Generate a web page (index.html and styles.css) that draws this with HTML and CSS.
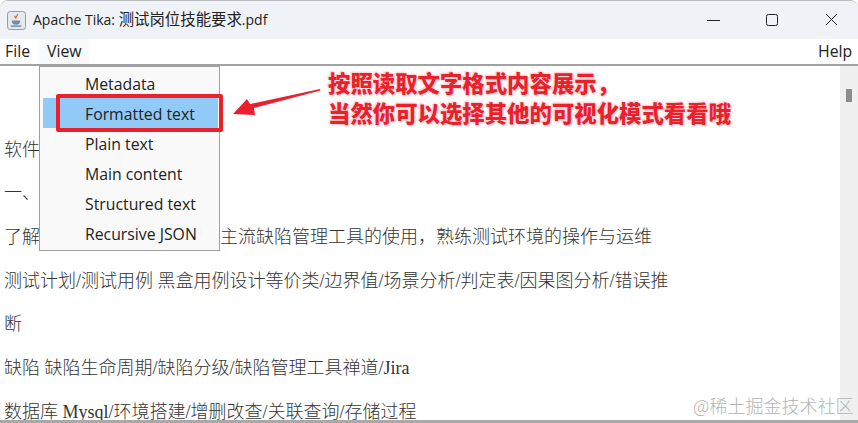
FILE: index.html
```html
<!DOCTYPE html>
<html>
	<head>
		<meta charset="UTF-8">
		<title>Apache Tika</title>
		<link rel="stylesheet" href="styles.css">
	</head>
	<body>
		<div class="window">
			<div class="titlebar">
				<svg class="app-icon" width="19" height="19" viewBox="0 0 20 20">
					<rect x="0.500" y="0.500" width="19" height="19" rx="3" fill="#e4e9ef" stroke="#8b97a6"/>
					<path d="M11 3c1 2-2.500 3-1.500 5M8.500 5c-.5 1 .5 2 .5 3" fill="none" stroke="#d9682a" stroke-width="1.200"/>
					<path d="M5 10h9c0 3-1.500 4.500-4.500 4.500S5 13 5 10z" fill="#6f8fa8"/>
					<path d="M4 16h11" stroke="#5c7c96" stroke-width="1.300"/>
				</svg>
				<span class="title">Apache Tika: <span class="title-cjk">测试岗位技能要求</span>.pdf</span>
				<div class="controls">
					<svg width="59" height="38" viewBox="0 0 59 38"><path d="M0 19.500h13" stroke="#222" fill="none"/></svg>
					<svg width="59" height="38" viewBox="0 0 59 38"><rect x="0.500" y="13.500" width="11" height="11" rx="2" stroke="#222" fill="none"/></svg>
					<svg width="13" height="38" viewBox="0 0 13 38"><path d="M1 13l11 11M12 13L1 24" stroke="#222" fill="none"/></svg>
				</div>
			</div>
			<div class="menubar">
				<span class="menu">File</span>
				<span class="menu active">View</span>
				<span class="menu help">Help</span>
			</div>
			<div class="main">
				<div class="doc">
					<p class="blank"></p>
					<p>软件</p>
					<p>一、</p>
					<p>了解<span class="gap"></span>主流缺陷管理工具的使用&#65292;熟练测试环境的操作与运维</p>
					<p>测试计划/测试用例 黑盒用例设计等价类/边界值/场景分析/判定表/因果图分析/错误推</p>
					<p>断</p>
					<p>缺陷 缺陷生命周期/缺陷分级/缺陷管理工具禅道/Jira</p>
					<p>数据库 Mysql/环境搭建/增删改查/关联查询/存储过程</p>
				</div>
				<div class="scrollbar"><div class="thumb"></div></div>
			</div>
		</div>

		<ul class="dropdown">
			<li>Metadata</li>
			<li class="selected">Formatted text</li>
			<li>Plain text</li>
			<li>Main content</li>
			<li>Structured text</li>
			<li>Recursive JSON</li>
		</ul>

		<div class="redbox"></div>
		<svg class="arrow" width="90" height="30" viewBox="0 0 90 30">
			<polygon points="87,0 87.500,1.500 21,19 22,26 0,25 14,10 17,15" fill="#e8212d"/>
		</svg>
		<div class="note">按照读取文字格式内容展示&#65292;<br>当然你可以选择其他的可视化模式看看哦</div>
		<div class="watermark">@稀土掘金技术社区</div>
	</body>
</html>
```

FILE: styles.css
```css
*{
	margin: 0;
	padding: 0;
	list-style: none;
	box-sizing: border-box;
}
html,body{
	width: 858px;
	height: 423px;
	overflow: hidden;
	background: #fff;
}
.window{
	height: 423px;
	display: flex;
	flex-direction: column;
	border-top: 1px solid #b9bcc0;
	border-bottom: 3px solid #a9a9a9;
	border-radius: 8px 8px 0 0;
	overflow: hidden;
}
.titlebar{
	height: 38px;
	flex: none;
	background: #eff3f8;
	display: flex;
	align-items: center;
	padding-left: 7px;
}
.app-icon{
	flex: none;
}
.title{
	margin-left: 7px;
	padding-bottom: 3px;
	font: 14px "Open Sans", "Noto Sans CJK SC", sans-serif;
	color: #222;
}
.title-cjk{
	font-size: 15.400px;
}
.controls{
	margin-left: auto;
	display: flex;
	height: 38px;
	margin-right: 20px;
}
.menubar{
	height: 27px;
	flex: none;
	background: #fff;
	border-bottom: 2px solid #a2a2a2;
	display: flex;
	font: 15.800px "Open Sans", sans-serif;
	color: #222;
}
.menu{
	padding: 1px 0 0 5px;
	width: 39px;
}
.active{
	width: 50px;
	padding-left: 8px;
	background: #f8f9fa;
}
.help{
	margin-left: auto;
	width: 40px;
	padding-left: 0;
}
.main{
	flex: 1;
	display: flex;
	min-height: 0;
}
.doc{
	flex: 1;
	padding-left: 4px;
	overflow: hidden;
	font: 18px/43.7px "Liberation Serif", "Noto Sans CJK SC", serif;
	font-weight: 300;
	color: #333;
}
.doc p{
	height: 43.7px;
	white-space: nowrap;
}
.doc .blank{
	height: 62.500px;
}
.gap{
	display: inline-block;
	width: 180px;
}
.scrollbar{
	width: 18px;
	flex: none;
	background: #f0f0f0;
	padding: 23px 6px 0;
}
.thumb{
	height: 13px;
	background: #8c8c8c;
}
.dropdown{
	position: absolute;
	left: 39px;
	top: 66px;
	width: 181px;
	height: 185px;
	padding: 1px 1px 0 3px;
	background: #f9f9f9;
	border: 1px solid #a0a0a0;
	font: 15.800px/30px "Open Sans", sans-serif;
	color: #222;
}
.dropdown li{
	height: 30px;
	padding: 1px 0 0 42px;
}
.selected{
	background: #91c9f7;
}
.redbox{
	position: absolute;
	left: 56px;
	top: 94px;
	width: 167px;
	height: 38px;
	border: 4px solid #e8212d;
	border-radius: 2px;
}
.arrow{
	position: absolute;
	left: 233px;
	top: 89px;
}
.note{
	position: absolute;
	left: 328px;
	top: 67px;
	font: 900 22.400px/30px "Noto Sans CJK SC", sans-serif;
	color: #e8212d;
	white-space: nowrap;
	text-shadow: 0 0 2px #fff, 1px 1px 2px #f7b5b9, -1px -1px 2px #f7b5b9;
}
.watermark{
	position: absolute;
	left: 693px;
	top: 393px;
	font: 18px/24px "Noto Sans CJK SC", sans-serif;
	font-weight: 300;
	color: #b4b4b4;
	white-space: nowrap;
}
```
